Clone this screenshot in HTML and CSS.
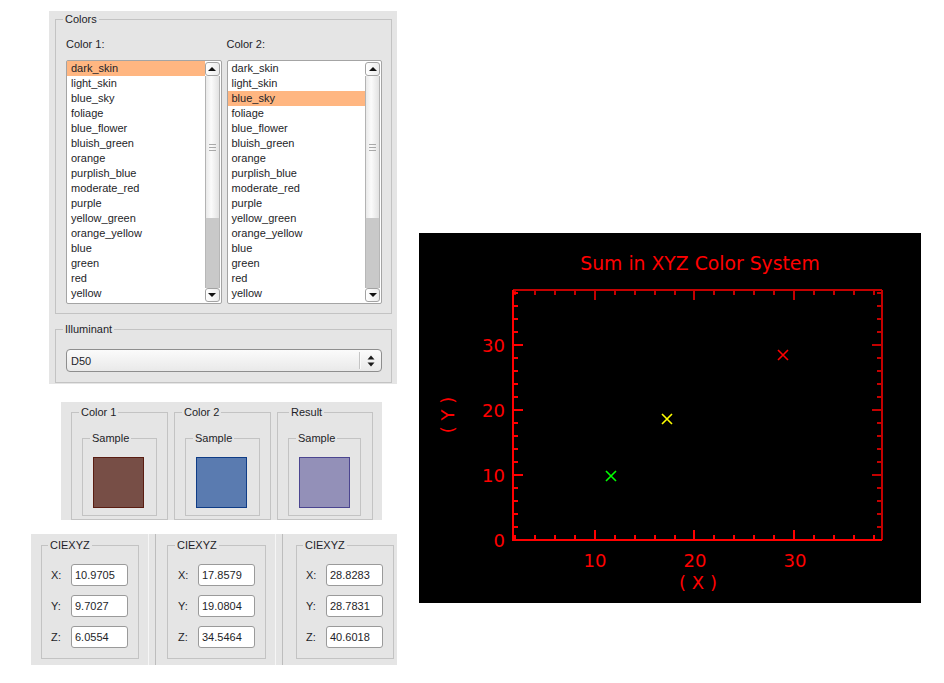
FILE: index.html
```html
<!DOCTYPE html>
<html>
<head>
<meta charset="utf-8">
<title>Color Sum</title>
<link rel="stylesheet" href="styles.css">
</head>
<body>
<div class="app">
  <div class="left">
    <div class="panel colors-panel">
      <fieldset class="group colors-group">
        <legend>Colors</legend>
        <div class="lists">
          <div class="list-col">
            <div class="list-label">Color 1:</div>
            <div class="listbox">
              <ul class="items">
                <li class="sel">dark_skin</li><li>light_skin</li><li>blue_sky</li><li>foliage</li><li>blue_flower</li><li>bluish_green</li><li>orange</li><li>purplish_blue</li><li>moderate_red</li><li>purple</li><li>yellow_green</li><li>orange_yellow</li><li>blue</li><li>green</li><li>red</li><li>yellow</li>
              </ul>
              <div class="scrollbar">
                <div class="sb-btn"><span class="tri-up"></span></div>
                <div class="sb-thumb"><span class="grip"></span></div>
                <div class="sb-track"></div>
                <div class="sb-btn"><span class="tri-down"></span></div>
              </div>
            </div>
          </div>
          <div class="list-col">
            <div class="list-label">Color 2:</div>
            <div class="listbox">
              <ul class="items">
                <li>dark_skin</li><li>light_skin</li><li class="sel">blue_sky</li><li>foliage</li><li>blue_flower</li><li>bluish_green</li><li>orange</li><li>purplish_blue</li><li>moderate_red</li><li>purple</li><li>yellow_green</li><li>orange_yellow</li><li>blue</li><li>green</li><li>red</li><li>yellow</li>
              </ul>
              <div class="scrollbar">
                <div class="sb-btn"><span class="tri-up"></span></div>
                <div class="sb-thumb"><span class="grip"></span></div>
                <div class="sb-track"></div>
                <div class="sb-btn"><span class="tri-down"></span></div>
              </div>
            </div>
          </div>
        </div>
      </fieldset>
      <fieldset class="group illum-group">
        <legend>Illuminant</legend>
        <div class="combo">
          <span class="combo-text">D50</span>
          <span class="combo-sep"></span>
          <svg class="combo-arrows" width="8" height="12" viewBox="0 0 8 12"><path d="M0.5 4.5 L4 0.5 L7.5 4.5 Z M0.5 7.5 L4 11.5 L7.5 7.5 Z" fill="#1a1a1a"/></svg>
        </div>
      </fieldset>
    </div>

    <div class="panel samples-panel">
      <fieldset class="group outer-sample">
        <legend>Color 1</legend>
        <fieldset class="group inner-sample">
          <legend>Sample</legend>
          <div class="swatch swatch-1"></div>
        </fieldset>
      </fieldset>
      <fieldset class="group outer-sample">
        <legend>Color 2</legend>
        <fieldset class="group inner-sample">
          <legend>Sample</legend>
          <div class="swatch swatch-2"></div>
        </fieldset>
      </fieldset>
      <fieldset class="group outer-sample result">
        <legend>Result</legend>
        <fieldset class="group inner-sample">
          <legend>Sample</legend>
          <div class="swatch swatch-3"></div>
        </fieldset>
      </fieldset>
    </div>

    <div class="panel xyz-panel">
      <div class="xyz-cell cell-1">
        <fieldset class="group xyz-group">
          <legend>CIEXYZ</legend>
          <div class="xyz-row"><span class="xyz-label">X:</span><span class="field">10.9705</span></div>
          <div class="xyz-row"><span class="xyz-label">Y:</span><span class="field">9.7027</span></div>
          <div class="xyz-row"><span class="xyz-label">Z:</span><span class="field">6.0554</span></div>
        </fieldset>
      </div>
      <div class="divider"></div>
      <div class="xyz-cell cell-2">
        <fieldset class="group xyz-group wide">
          <legend>CIEXYZ</legend>
          <div class="xyz-row"><span class="xyz-label">X:</span><span class="field">17.8579</span></div>
          <div class="xyz-row"><span class="xyz-label">Y:</span><span class="field">19.0804</span></div>
          <div class="xyz-row"><span class="xyz-label">Z:</span><span class="field">34.5464</span></div>
        </fieldset>
      </div>
      <div class="divider"></div>
      <div class="xyz-cell cell-3">
        <fieldset class="group xyz-group">
          <legend>CIEXYZ</legend>
          <div class="xyz-row"><span class="xyz-label">X:</span><span class="field">28.8283</span></div>
          <div class="xyz-row"><span class="xyz-label">Y:</span><span class="field">28.7831</span></div>
          <div class="xyz-row"><span class="xyz-label">Z:</span><span class="field">40.6018</span></div>
        </fieldset>
      </div>
    </div>
  </div>

  <div class="plot">
    <svg width="502" height="370" viewBox="0 0 502 370">
      <rect x="0" y="0" width="502" height="370" fill="#000"/>
      <text class="plot-title" x="281" y="37" text-anchor="middle">Sum in XYZ Color System</text>
      <path d="M94 57H463M463 57V307" stroke="#c40000" stroke-width="2" fill="none"/>
      <path d="M94 57V308M93 307H463" stroke="#ff0000" stroke-width="2" fill="none"/>
      <path d="M96 307V302M116 307V302M136 307V302M156 307V302M176 307V297M196 307V302M216 307V302M236 307V302M256 307V302M275 307V297M295 307V302M315 307V302M335 307V302M355 307V302M375 307V297M395 307V302M415 307V302M435 307V302M455 307V302" stroke="#ff0000" stroke-width="2" fill="none"/>
      <path d="M96 57V62M116 57V62M136 57V62M156 57V62M176 57V67M196 57V62M216 57V62M236 57V62M256 57V62M275 57V67M295 57V62M315 57V62M335 57V62M355 57V62M375 57V67M395 57V62M415 57V62M435 57V62M455 57V62" stroke="#c40000" stroke-width="2" fill="none"/>
      <path d="M94 294H99M94 281H99M94 268H99M94 255H99M94 242H104M94 229H99M94 216H99M94 203H99M94 190H99M94 177H104M94 164H99M94 151H99M94 138H99M94 125H99M94 112H104M94 99H99M94 86H99M94 73H99M94 60H99" stroke="#ff0000" stroke-width="2" fill="none"/>
      <path d="M463 294H458M463 281H458M463 268H458M463 255H458M463 242H453M463 229H458M463 216H458M463 203H458M463 190H458M463 177H453M463 164H458M463 151H458M463 138H458M463 125H458M463 112H453M463 99H458M463 86H458M463 73H458M463 60H458" stroke="#c40000" stroke-width="2" fill="none"/>
      <text class="plot-num" x="86" y="314" text-anchor="end">0</text>
      <text class="plot-num" x="86" y="249" text-anchor="end">10</text>
      <text class="plot-num" x="86" y="184" text-anchor="end">20</text>
      <text class="plot-num" x="86" y="119" text-anchor="end">30</text>
      <text class="plot-num" x="176" y="334" text-anchor="middle">10</text>
      <text class="plot-num" x="276" y="334" text-anchor="middle">20</text>
      <text class="plot-num" x="376" y="334" text-anchor="middle">30</text>
      <text class="plot-num" x="279" y="356" text-anchor="middle">( X )</text>
      <text class="plot-num" transform="translate(35 182) rotate(-90)" text-anchor="middle">( Y )</text>
      <path d="M187 238L197 248M197 238L187 248" stroke="#00ff00" stroke-width="1.6"/>
      <path d="M243 181L253 191M253 181L243 191" stroke="#ffff00" stroke-width="1.6"/>
      <path d="M359 117L369 127M369 117L359 127" stroke="#ff0000" stroke-width="1.6"/>
    </svg>
  </div>
</div>
</body>
</html>
```

FILE: styles.css
```css
html, body {
  margin: 0;
  padding: 0;
  background: #ffffff;
}

body {
  font-family: "Liberation Sans", Arial, sans-serif;
  font-size: 11px;
  color: #1e1e28;
}

.app {
  display: flex;
  align-items: flex-start;
}

.left {
  width: 397px;
  padding-top: 11px;
  display: flex;
  flex-direction: column;
  align-items: flex-start;
}

.panel {
  background: #e5e5e5;
  box-sizing: border-box;
}

.group {
  margin: 0;
  min-width: 0;
  border: 1px solid #c3c3c3;
  box-sizing: border-box;
}

.group > legend {
  font-size: 11px;
  line-height: 13px;
  padding: 0 2px;
  margin-left: -3px;
  color: #1e1e28;
}

/* ---------- Colors panel ---------- */
.colors-panel {
  margin-left: 49px;
  width: 348px;
  padding: 2px 5px 1px 6px;
}

.colors-group {
  width: 337px;
  padding: 12px 9px 9px 10px;
}

.lists {
  display: flex;
  gap: 5px;
}

.list-col {
  width: 156px;
}

.list-label {
  line-height: 13px;
  height: 13px;
  margin-bottom: 9px;
}

.listbox {
  height: 244px;
  box-sizing: border-box;
  border: 1px solid #a4a4a4;
  border-radius: 2px;
  background: #ffffff;
  display: flex;
}

.items {
  list-style: none;
  margin: 0;
  padding: 0;
  flex: 1;
}

.items li {
  height: 15px;
  line-height: 15px;
  padding-left: 4px;
  white-space: nowrap;
}

.items li.sel {
  background: #ffb681;
}

.scrollbar {
  width: 15px;
  margin: 1px 1px 1px 0;
  display: flex;
  flex-direction: column;
}

.sb-btn {
  height: 14px;
  box-sizing: border-box;
  border: 1px solid #a3a3a3;
  border-radius: 3px;
  background: linear-gradient(to right, #ffffff, #ececec);
  display: flex;
  align-items: center;
  justify-content: center;
}

.tri-up {
  width: 0;
  height: 0;
  border-left: 4px solid transparent;
  border-right: 4px solid transparent;
  border-bottom: 4px solid #111;
}

.tri-down {
  width: 0;
  height: 0;
  border-left: 4px solid transparent;
  border-right: 4px solid transparent;
  border-top: 4px solid #111;
}

.sb-thumb {
  height: 142px;
  box-sizing: border-box;
  border-left: 1px solid #b3b3b3;
  border-right: 1px solid #b3b3b3;
  background: linear-gradient(to right, #e9e9e9, #fbfbfb 40%, #e2e2e2);
  display: flex;
  align-items: center;
  justify-content: center;
}

.grip {
  width: 7px;
  height: 7px;
  background: repeating-linear-gradient(to bottom, #a9a9a9 0, #a9a9a9 1px, transparent 1px, transparent 3px);
}

.sb-track {
  flex: 1;
  box-sizing: border-box;
  border-left: 1px solid #b7b7b7;
  border-right: 1px solid #b7b7b7;
  background: #c9c9c9;
}

/* ---------- Illuminant ---------- */
.illum-group {
  width: 337px;
  margin-top: 9px;
  padding: 13px 9px 10px 10px;
}

.combo {
  height: 23px;
  box-sizing: border-box;
  border: 1px solid #8e8e8e;
  border-radius: 4px;
  background: linear-gradient(to bottom, #fbfbfb, #e9e9e9);
  display: flex;
  align-items: center;
}

.combo-text {
  flex: 1;
  padding-left: 4px;
}

.combo-sep {
  width: 1px;
  height: 17px;
  background: #c4c4c4;
  border-right: 1px solid #fafafa;
}

.combo-arrows {
  margin: 0 6px 0 6px;
}

/* ---------- Samples panel ---------- */
.samples-panel {
  margin-left: 61px;
  margin-top: 18px;
  width: 321px;
  height: 118px;
  overflow: hidden;
  padding: 4px 0 0 10px;
  display: flex;
  gap: 6px;
}

.outer-sample {
  width: 97px;
  padding: 13px 10px 3px 10px;
}

.outer-sample.result {
  width: 96px;
}

.outer-sample.result > legend {
  margin-left: 1px;
}

.inner-sample {
  width: 75px;
  padding: 12px 0 7px 10px;
}

.outer-sample.result .inner-sample {
  width: 73px;
}

.swatch {
  width: 51px;
  height: 51px;
  box-sizing: border-box;
  border: 1px solid;
}

.swatch-1 {
  background: #774e46;
  border-color: #5a1d12;
}

.swatch-2 {
  background: #5a7bb0;
  border-color: #0f3c86;
}

.swatch-3 {
  background: #9390b8;
  border-color: #4b4590;
}

/* ---------- CIEXYZ panel ---------- */
.xyz-panel {
  margin-left: 31px;
  margin-top: 14px;
  width: 366px;
  height: 131px;
  display: flex;
}

.xyz-cell {
  padding-top: 5px;
  box-sizing: border-box;
}

.cell-1 {
  width: 117px;
  padding-left: 10px;
}

.cell-2 {
  width: 119px;
  padding-left: 11px;
}

.cell-3 {
  width: 114px;
  padding-left: 13px;
}

.divider {
  width: 8px;
  box-sizing: border-box;
  border-left: 1px solid #f6f6f6;
  border-right: 1px solid #bdbdbd;
}

.xyz-group {
  width: 98px;
  padding: 12px 10px 10px 9px;
}

.xyz-group.wide {
  width: 99px;
  padding-left: 10px;
}

.xyz-row {
  display: flex;
  align-items: center;
  height: 22px;
  margin-bottom: 9px;
}

.xyz-row:last-child {
  margin-bottom: 0;
}

.xyz-label {
  width: 20px;
}

.field {
  width: 57px;
  height: 22px;
  box-sizing: border-box;
  border: 1px solid #9a9a9a;
  border-radius: 3px;
  background: #ffffff;
  line-height: 20px;
  padding-left: 3px;
}

/* ---------- Plot ---------- */
.plot {
  margin-left: 22px;
  margin-top: 233px;
  width: 502px;
  height: 370px;
}

.plot svg {
  display: block;
}

.plot-title {
  font-family: "DejaVu Sans", sans-serif;
  font-size: 18.8px;
  fill: #ff0000;
}

.plot-num {
  font-family: "DejaVu Sans", sans-serif;
  font-size: 18px;
  fill: #ff0000;
}
```
